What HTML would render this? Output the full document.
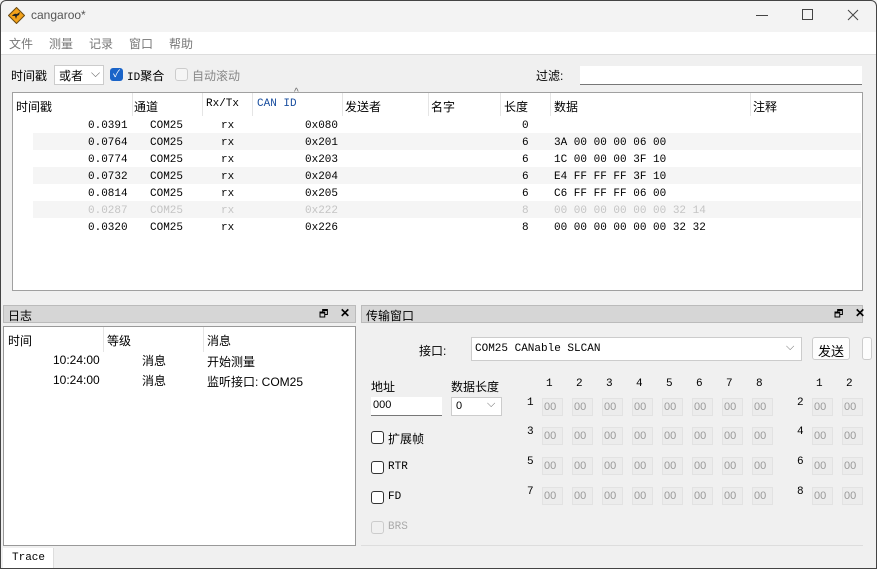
<!DOCTYPE html>
<html><head><meta charset="utf-8"><style>
*{margin:0;padding:0;box-sizing:border-box}
body{width:877px;height:569px;overflow:hidden;background:#f0f0f0;font-family:"Liberation Sans","Noto Sans CJK SC",sans-serif;font-size:12px;color:#000;position:relative}
.a{position:absolute;white-space:nowrap}
.m{font-family:"Liberation Mono","Noto Sans CJK SC",monospace;font-size:11px}
.hdr span{position:absolute;top:5px}
.row{position:absolute;left:13px;width:848px;height:17px}
.row span{position:absolute;top:4px}
.box{position:absolute;width:21px;height:18px;background:#ececec;border:1px solid #e2e2e2;color:#9a9a9a;font-size:11px;padding:2px 0 0 1px}
.cb{position:absolute;width:13px;height:13px;border:1px solid #333;border-radius:3px;background:#fff}
</style></head><body>
<div class="a" style="left:0;top:0;width:877px;height:32px;background:#f3f3f3"></div>
<svg class="a" style="left:8px;top:7px" width="17" height="17" viewBox="0 0 17 17"><path d="M8.5 0.5 L16.5 8.5 L8.5 16.5 L0.5 8.5Z" fill="#f3a21a" stroke="#6b4a10" stroke-width="1"/><path d="M4 9 Q6 6 9 7 L12 5 L11 8 L9 9 L8 12 L7 9Z" fill="#222"/></svg>
<div class="a" style="left:31px;top:8px;font-size:12px;color:#555">cangaroo*</div>
<div class="a" style="left:756px;top:15px;width:12px;height:1px;background:#444"></div>
<div class="a" style="left:802px;top:9px;width:11px;height:11px;border:1px solid #444"></div>
<svg class="a" style="left:847px;top:9px" width="12" height="12"><path d="M1 1L11 11M11 1L1 11" stroke="#444" stroke-width="1"/></svg>
<div class="a" style="left:0;top:32px;width:877px;height:22px;background:#fff"></div>
<div class="a" style="left:9px;top:35px;color:#777">文件</div>
<div class="a" style="left:49px;top:35px;color:#777">测量</div>
<div class="a" style="left:89px;top:35px;color:#777">记录</div>
<div class="a" style="left:129px;top:35px;color:#777">窗口</div>
<div class="a" style="left:169px;top:35px;color:#777">帮助</div>
<div class="a" style="left:0;top:54px;width:877px;height:1px;background:#ddd"></div>

<div class="a" style="left:11px;top:67px">时间戳</div>
<div class="a" style="left:54px;top:65px;width:50px;height:20px;background:#fff;border:1px solid #ccc;padding:1px 4px">或者<span style="position:absolute;left:36px;top:0;color:#666">⌵</span></div>
<div class="a" style="left:110px;top:68px;width:13px;height:13px;background:#1a64c8;border-radius:3px;color:#fff;font-size:10px;line-height:13px;text-align:center">✓</div>
<div class="a" style="left:127px;top:67px"><span class="m">ID</span>聚合</div>
<div class="a" style="left:175px;top:68px;width:13px;height:13px;border:1px solid #ccc;border-radius:3px;background:#f5f5f5"></div>
<div class="a" style="left:192px;top:67px;color:#888">自动滚动</div>
<div class="a" style="left:536px;top:67px">过滤:</div>
<div class="a" style="left:580px;top:66px;width:282px;height:19px;background:#fff;border-bottom:1px solid #777"></div>

<div class="a" style="left:12px;top:92px;width:851px;height:199px;background:#fff;border:1px solid #a0a0a0"></div>
<div class="a hdr" style="left:13px;top:93px;width:848px;height:23px">
<span style="left:3px">时间戳</span><span style="left:121px">通道</span><span class="m" style="left:193px">Rx/Tx</span><span class="m" style="left:244px;color:#1a4fa0">CAN ID</span><span style="left:332px">发送者</span><span style="left:418px">名字</span><span style="left:491px">长度</span><span style="left:541px">数据</span><span style="left:740px">注释</span>
<i style="position:absolute;left:119px;top:0;width:1px;height:23px;background:#e5e5e5"></i><i style="position:absolute;left:189px;top:0;width:1px;height:23px;background:#e5e5e5"></i><i style="position:absolute;left:239px;top:0;width:1px;height:23px;background:#e5e5e5"></i><i style="position:absolute;left:329px;top:0;width:1px;height:23px;background:#e5e5e5"></i><i style="position:absolute;left:415px;top:0;width:1px;height:23px;background:#e5e5e5"></i><i style="position:absolute;left:487px;top:0;width:1px;height:23px;background:#e5e5e5"></i><i style="position:absolute;left:537px;top:0;width:1px;height:23px;background:#e5e5e5"></i><i style="position:absolute;left:737px;top:0;width:1px;height:23px;background:#e5e5e5"></i>
<span style="left:281px;top:-6px;color:#666;font-size:10px">^</span>
</div>

<div class="m">
<div class="row" style="top:116px"><span style="left:75px">0.0391</span><span style="left:137px">COM25</span><span style="left:208px">rx</span><span style="left:292px">0x080</span><span style="left:509px">0</span></div>
<div class="row" style="top:133px;background:#f5f5f5;left:33px;width:828px"></div>
<div class="row" style="top:133px"><span style="left:75px">0.0764</span><span style="left:137px">COM25</span><span style="left:208px">rx</span><span style="left:292px">0x201</span><span style="left:509px">6</span><span style="left:541px">3A 00 00 00 06 00</span></div>
<div class="row" style="top:150px"><span style="left:75px">0.0774</span><span style="left:137px">COM25</span><span style="left:208px">rx</span><span style="left:292px">0x203</span><span style="left:509px">6</span><span style="left:541px">1C 00 00 00 3F 10</span></div>
<div class="row" style="top:167px;background:#f5f5f5;left:33px;width:828px"></div>
<div class="row" style="top:167px"><span style="left:75px">0.0732</span><span style="left:137px">COM25</span><span style="left:208px">rx</span><span style="left:292px">0x204</span><span style="left:509px">6</span><span style="left:541px">E4 FF FF FF 3F 10</span></div>
<div class="row" style="top:184px"><span style="left:75px">0.0814</span><span style="left:137px">COM25</span><span style="left:208px">rx</span><span style="left:292px">0x205</span><span style="left:509px">6</span><span style="left:541px">C6 FF FF FF 06 00</span></div>
<div class="row" style="top:201px;background:#f5f5f5;left:33px;width:828px"></div>
<div class="row" style="top:201px;color:#c4c4c4"><span style="left:75px">0.0287</span><span style="left:137px">COM25</span><span style="left:208px">rx</span><span style="left:292px">0x222</span><span style="left:509px">8</span><span style="left:541px">00 00 00 00 00 00 32 14</span></div>
<div class="row" style="top:218px"><span style="left:75px">0.0320</span><span style="left:137px">COM25</span><span style="left:208px">rx</span><span style="left:292px">0x226</span><span style="left:509px">8</span><span style="left:541px">00 00 00 00 00 00 32 32</span></div>
</div>

<div class="a" style="left:3px;top:305px;width:353px;height:18px;background:#d6d6d6;border:1px solid #bbb"></div>
<div class="a" style="left:8px;top:307px">日志</div>
<div class="a" style="left:319px;top:307px;font-size:10px">🗗</div>
<div class="a" style="left:340px;top:306px;font-weight:bold">✕</div>
<div class="a" style="left:3px;top:326px;width:353px;height:220px;background:#fff;border:1px solid #999"></div>
<div class="a" style="left:8px;top:332px">时间</div>
<div class="a" style="left:107px;top:332px">等级</div>
<div class="a" style="left:207px;top:332px">消息</div>
<div class="a" style="left:103px;top:327px;width:1px;height:25px;background:#e5e5e5"></div>
<div class="a" style="left:203px;top:327px;width:1px;height:25px;background:#e5e5e5"></div>
<div class="a" style="left:53px;top:353px">10:24:00</div>
<div class="a" style="left:142px;top:352px">消息</div>
<div class="a" style="left:207px;top:353px">开始测量</div>
<div class="a" style="left:53px;top:373px">10:24:00</div>
<div class="a" style="left:142px;top:372px">消息</div>
<div class="a" style="left:207px;top:373px">监听接口: COM25</div>

<div class="a" style="left:361px;top:305px;width:502px;height:18px;background:#d6d6d6;border:1px solid #bbb"></div>
<div class="a" style="left:366px;top:307px">传输窗口</div>
<div class="a" style="left:834px;top:307px;font-size:10px">🗗</div>
<div class="a" style="left:855px;top:306px;font-weight:bold">✕</div>
<div class="a" style="left:419px;top:342px">接口:</div>
<div class="a m" style="left:471px;top:337px;width:331px;height:24px;background:#fff;border:1px solid #ccc;padding:5px 3px">COM25 CANable SLCAN<span style="position:absolute;left:314px;top:3px;color:#666;font-family:'Liberation Sans'">⌵</span></div>
<div class="a" style="left:812px;top:337px;width:38px;height:23px;background:#fdfdfd;border:1px solid #ccc;border-radius:3px;padding:3px 5px;font-size:13px">发送</div>
<div class="a" style="left:862px;top:337px;width:10px;height:23px;background:#fdfdfd;border:1px solid #ccc;border-radius:3px"></div>
<div class="a" style="left:371px;top:378px">地址</div>
<div class="a" style="left:451px;top:378px">数据长度</div>
<div class="a" style="left:371px;top:397px;width:71px;height:19px;background:#fff;border-bottom:1px solid #777;padding:2px 2px;font-size:11px">000</div>
<div class="a" style="left:451px;top:397px;width:51px;height:19px;background:#fff;border:1px solid #ccc;padding:2px 4px;font-size:11px">0<span style="position:absolute;left:35px;top:0;color:#666">⌵</span></div>
<div class="cb" style="left:371px;top:431px"></div><div class="a" style="left:388px;top:430px">扩展帧</div>
<div class="cb" style="left:371px;top:461px"></div><div class="a m" style="left:388px;top:461px">RTR</div>
<div class="cb" style="left:371px;top:491px"></div><div class="a m" style="left:388px;top:491px">FD</div>
<div class="cb" style="left:371px;top:521px;border-color:#ccc;background:#f0f0f0"></div><div class="a m" style="left:388px;top:521px;color:#aaa">BRS</div>
<div id="g"></div>
<div class="a" style="left:361px;top:545px;width:502px;height:1px;background:#ddd"></div>

<div class="a" style="left:3px;top:548px;width:51px;height:21px;background:#fff;border-right:1px solid #ddd"></div>
<div class="a m" style="left:12px;top:552px">Trace</div>
<div class="a" style="left:0;top:0;width:877px;height:569px;border:1px solid #444;border-radius:6px 6px 0 0;pointer-events:none"></div>
<script>
var g=document.getElementById('g'),h='';
var xs=[542,572,602,632,662,692,722,752];
xs.forEach(function(x,i){h+='<div class="a m" style="left:'+(x+4)+'px;top:378px">'+(i+1)+'</div>';});
h+='<div class="a m" style="left:816px;top:378px">1</div><div class="a m" style="left:846px;top:378px">2</div>';
var ys=[398,427,457,487];
ys.forEach(function(y,r){
h+='<div class="a m" style="left:527px;top:'+(y-1)+'px">'+(2*r+1)+'</div>';
h+='<div class="a m" style="left:797px;top:'+(y-1)+'px">'+(2*r+2)+'</div>';
xs.concat([812,842]).forEach(function(x){h+='<div class="box" style="left:'+x+'px;top:'+y+'px">00</div>';});
});
g.innerHTML=h;
</script>
</body></html>
